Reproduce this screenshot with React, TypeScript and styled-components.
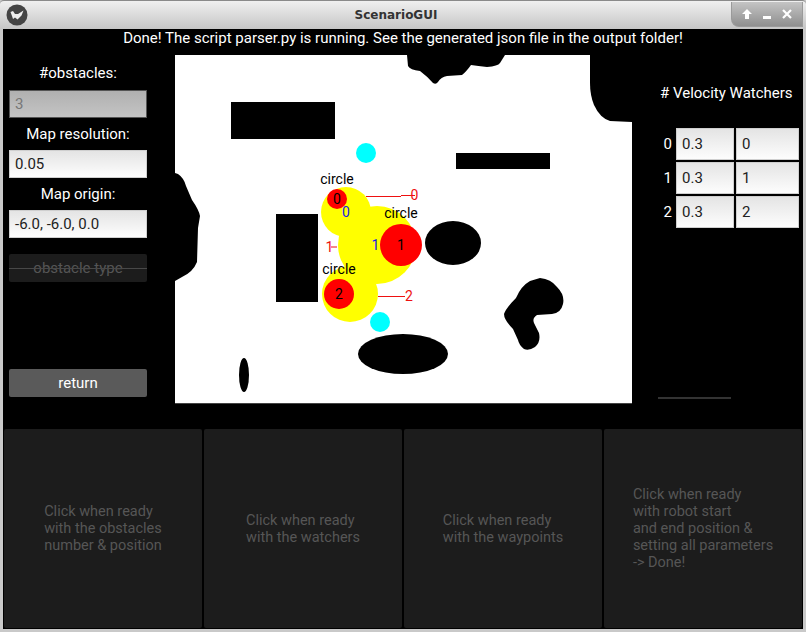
import React from "react";
import styled, { createGlobalStyle } from "styled-components";

const Global = createGlobalStyle`
  html, body { margin: 0; padding: 0; background: #c8c8c8; }
  body { font-family: Roboto, "Liberation Sans", sans-serif; }
`;

const Window = styled.div`
  width: 806px;
  height: 632px;
  box-sizing: border-box;
  display: flex;
  flex-direction: column;
  background: #c9c9c9;
  padding: 0 3px 3px;
  overflow: hidden;
`;

const TitleBar = styled.div`
  height: 29px;
  margin: 0 -3px;
  flex: none;
  display: flex;
  align-items: center;
  background: linear-gradient(#f0f0f0, #c6c6c6);
  border-top: 1px solid #8a8a8a;
  border-radius: 4px 4px 0 0;
  box-sizing: border-box;
`;

const AppLogo = styled.svg`
  width: 22px;
  height: 22px;
  margin-left: 6px;
  flex: none;
`;

const Title = styled.div`
  flex: 1;
  text-align: center;
  font: bold 12px "DejaVu Sans", sans-serif;
  color: #333;
  padding-left: 33px;
`;

const WindowButtons = styled.div`
  width: 72px;
  height: 25px;
  margin-right: 3px;
  align-self: flex-end;
  margin-bottom: 2px;
  border-radius: 0 0 0 8px;
  background: linear-gradient(#c4c4c4, #8f8f8f);
  border: 1px solid #9a9a9a;
  border-top: none;
  box-sizing: border-box;
  display: flex;
  align-items: center;
  justify-content: space-around;
  padding: 0 5px;
`;

const Content = styled.div`
  flex: 1;
  background: #000;
  display: flex;
  flex-direction: column;
  min-height: 0;
`;

const Status = styled.div`
  height: 26px;
  flex: none;
  color: #fff;
  font-size: 15px;
  line-height: 19px;
  text-align: center;
`;

const Middle = styled.div`
  height: 374px;
  flex: none;
  display: flex;
`;

const LeftColumn = styled.div`
  width: 138px;
  margin: 0 28px 0 6px;
  padding-bottom: 32px;
  box-sizing: border-box;
  display: flex;
  flex-direction: column;
  flex: none;
`;

const FieldLabel = styled.div<{ $h: number }>`
  height: ${(p) => p.$h}px;
  display: flex;
  align-items: center;
  justify-content: center;
  color: #fff;
  font-size: 15px;
`;

const Input = styled.div<{ $disabled?: boolean }>`
  height: 28px;
  box-sizing: border-box;
  display: flex;
  align-items: center;
  padding-left: 5px;
  font-size: 15px;
  color: ${(p) => (p.$disabled ? "#777" : "#222")};
  background: ${(p) =>
    p.$disabled ? "linear-gradient(#b0b0b0, #c4c4c4)" : "linear-gradient(#e4e4e4, #fdfdfd)"};
  border: 1px solid ${(p) => (p.$disabled ? "#555" : "#cfcfcf")};
`;

const DisabledButton = styled.div`
  position: relative;
  height: 28px;
  margin-top: 16px;
  border-radius: 2px;
  background: #1c1c1c;
  color: #555;
  font-size: 15px;
  display: flex;
  align-items: center;
  justify-content: center;
  &::after {
    content: "";
    position: absolute;
    left: 0;
    right: 0;
    top: 14px;
    height: 1px;
    background: #484848;
  }
`;

const ReturnButton = styled.div`
  height: 28px;
  margin-top: auto;
  border-radius: 2px;
  background: #5a5a5a;
  color: #fff;
  font-size: 15px;
  display: flex;
  align-items: center;
  justify-content: center;
`;

const MapSvg = styled.svg`
  width: 457px;
  height: 349px;
  flex: none;
  display: block;
  font-family: Roboto, sans-serif;
  font-size: 14px;
`;

const RightColumn = styled.div`
  flex: 1;
  padding: 28px 0 30px 26px;
  box-sizing: border-box;
  display: flex;
  flex-direction: column;
`;

const WatchersTitle = styled.div`
  height: 20px;
  padding-left: 2px;
  color: #fff;
  font-size: 15px;
  line-height: 20px;
  white-space: pre;
`;

const WatcherGrid = styled.div`
  margin-top: 25px;
  display: grid;
  grid-template-columns: 16px 58px 63px;
  grid-auto-rows: 32px;
  column-gap: 2px;
  row-gap: 2px;
  margin-left: 0;
`;

const RowIndex = styled.div`
  color: #fff;
  font-size: 15px;
  display: flex;
  align-items: center;
  justify-content: flex-end;
  margin-right: -1px;
  padding-right: 3px;
`;

const Cell = styled(Input)`
  height: 32px;
`;

const Rule = styled.div`
  margin-top: auto;
  width: 73px;
  height: 2px;
  background: #333;
`;

const BottomBar = styled.div`
  height: 199px;
  flex: none;
  display: flex;
  gap: 2px;
  padding: 0 1px;
`;

const ActionButton = styled.div`
  flex: 1;
  border-radius: 2px;
  background: #1c1c1c;
  color: #565656;
  font-size: 14.5px;
  line-height: 17px;
  display: flex;
  align-items: center;
  justify-content: center;
  text-align: left;
  white-space: pre-line;
`;

const obstacles = [
  { x: 337, y: 199, r: 10, ly: 180, id: 0, lx: 337 },
  { x: 401, y: 245, r: 21, ly: 214, id: 1, lx: 401 },
  { x: 339, y: 294, r: 15, ly: 270, id: 2, lx: 339 },
];

const RED = "#ee1111";

const MapView = () => (
  <MapSvg viewBox="175 55 457 349">
    <rect x="175" y="55" width="457" height="349" fill="#fff" />
    <rect x="175" y="403" width="457" height="1" fill="#444" />
    <path d="M407 55 L408 66 Q410 70 420 71 Q428 77 433 83 Q436 85 438 82 Q441 77 447 76 L462 75 Q466 72 471 65 Q478 66 487 67 Q498 66 500 63 L505 55 Z" fill="#000" />
    <path d="M590 55 L590 83 Q590 95 594 105 Q600 118 610 121 L632 122 L632 55 Z" fill="#000" />
    <rect x="231" y="102" width="104" height="37" fill="#000" />
    <rect x="456" y="153" width="94" height="16" fill="#000" />
    <rect x="276" y="214" width="42" height="88" fill="#000" />
    <ellipse cx="453" cy="243" rx="28" ry="22" fill="#000" />
    <ellipse cx="403" cy="354" rx="45" ry="20" fill="#000" />
    <ellipse cx="244" cy="375" rx="5" ry="17" fill="#000" />
    <path d="M540 278 Q551 279 557 287 Q565 295 563 304 Q561 313 552 314 L537 315 Q532 318 534 323 L539 333 Q541 342 535 347 Q529 351 524 349 Q519 345 518 340 L513 329 Q504 320 504 314 Q506 308 516 298 Q521 286 530 281 Z" fill="#000" />
    <path d="M175 173 L178 174 Q184 178 186 186 L192 200 Q199 210 200 216 L198 228 L197 262 Q193 272 182 277 L175 281 Z" fill="#000" />

    <circle cx="346" cy="212" r="25" fill="#ffff00" />
    <circle cx="377" cy="245" r="39" fill="#ffff00" />
    <circle cx="350" cy="294" r="28" fill="#ffff00" />
    {obstacles.map((o) => (
      <circle key={o.id} cx={o.x} cy={o.y} r={o.r} fill="#ff0000" />
    ))}
    <circle cx="366" cy="153" r="10" fill="#00ffff" />
    <circle cx="380" cy="322" r="10" fill="#00ffff" />

    <path d="M366 196.5 H401 M401 195.5 H415 M331 247 H337 M378 296.5 H405" stroke={RED} strokeWidth="1" fill="none" />
    <g fill={RED} textAnchor="middle">
      <text x="414.5" y="200">0</text>
      <text x="329.5" y="252">1</text>
      <text x="409" y="301">2</text>
    </g>
    <g fill="#1a1ae6" textAnchor="middle">
      <text x="346" y="217">0</text>
      <text x="375.5" y="250">1</text>
    </g>
    <g fill="#000" textAnchor="middle">
      {obstacles.map((o) => (
        <React.Fragment key={o.id}>
          <text x={o.x} y={o.y + 5}>{o.id}</text>
          <text x={o.lx} y={o.ly + 4}>circle</text>
        </React.Fragment>
      ))}
    </g>
  </MapSvg>
);

const watchers = [
  ["0.3", "0"],
  ["0.3", "1"],
  ["0.3", "2"],
];

const actions = [
  "Click when ready\nwith the obstacles\nnumber & position",
  "Click when ready\nwith the watchers",
  "Click when ready\nwith the waypoints",
  "Click when ready\nwith robot start\nand end position &\nsetting all parameters\n-> Done!",
];

export default function App() {
  return (
    <>
      <Global />
      <Window>
        <TitleBar>
          <AppLogo viewBox="0 0 22 22">
            <circle cx="11" cy="11" r="10.5" fill="#444" />
            <path d="M4.5 8 L7 7 L9 10 L12 10 L17.5 6.5 L15.5 11.5 L11.5 15.5 L9 13.5 L7 15 L6 12 Z" fill="#eee" />
          </AppLogo>
          <Title>ScenarioGUI</Title>
          <WindowButtons>
            <svg width="12" height="12" viewBox="0 0 12 12">
              <path d="M6 1 L11 6 H8 V11 H4 V6 H1 Z" fill="#fff" />
            </svg>
            <svg width="12" height="12" viewBox="0 0 12 12">
              <rect x="2" y="8" width="8" height="3" fill="#fff" />
            </svg>
            <svg width="12" height="12" viewBox="0 0 12 12">
              <path d="M2 2 L10 10 M10 2 L2 10" stroke="#fff" strokeWidth="2.2" fill="none" />
            </svg>
          </WindowButtons>
        </TitleBar>
        <Content>
          <Status>Done! The script parser.py is running. See the generated json file in the output folder!</Status>
          <Middle>
            <LeftColumn>
              <FieldLabel $h={35}>#obstacles:</FieldLabel>
              <Input $disabled>3</Input>
              <FieldLabel $h={32}>Map resolution:</FieldLabel>
              <Input>0.05</Input>
              <FieldLabel $h={32}>Map origin:</FieldLabel>
              <Input>-6.0, -6.0, 0.0</Input>
              <DisabledButton>obstacle type</DisabledButton>
              <ReturnButton>return</ReturnButton>
            </LeftColumn>
            <MapView />
            <RightColumn>
              <WatchersTitle># Velocity Watchers</WatchersTitle>
              <WatcherGrid>
                {watchers.map((row, i) => (
                  <React.Fragment key={i}>
                    <RowIndex>{i}</RowIndex>
                    <Cell>{row[0]}</Cell>
                    <Cell>{row[1]}</Cell>
                  </React.Fragment>
                ))}
              </WatcherGrid>
              <Rule />
            </RightColumn>
          </Middle>
          <BottomBar>
            {actions.map((a) => (
              <ActionButton key={a}><div>{a}</div></ActionButton>
            ))}
          </BottomBar>
        </Content>
      </Window>
    </>
  );
}
